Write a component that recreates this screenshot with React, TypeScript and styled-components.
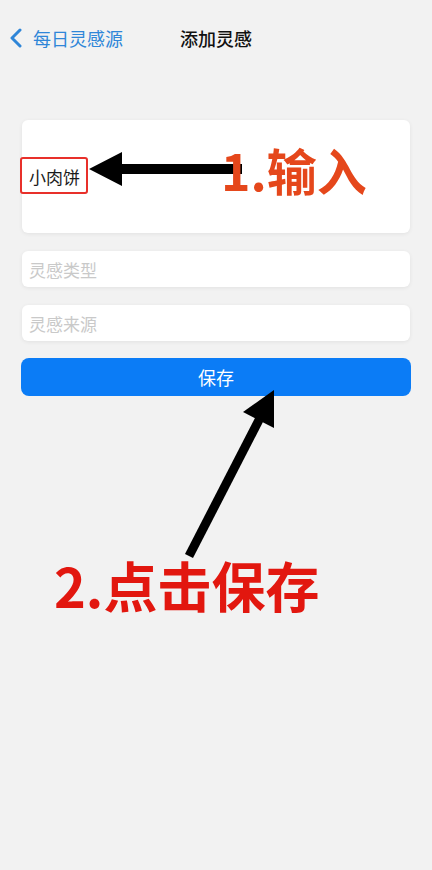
import React from "react";
import styled, {createGlobalStyle} from "styled-components";

const GlobalStyle = createGlobalStyle`
  html, body {
    margin: 0;
    padding: 0;
    background: #f2f2f2;
  }

  body {
    font-family: "Noto Sans CJK SC", "Noto Sans", sans-serif;
  }
`

const Page = styled.div`
  position: relative;
  width: 432px;
  min-height: 870px;
  background: #f2f2f2;
  overflow: hidden;
`

const NavBar = styled.div`
  position: relative;
  height: 44px;
  margin-top: 16px;
  display: flex;
  align-items: center;
  justify-content: center;
`

const BackLink = styled.div`
  position: absolute;
  left: 9px;
  top: 0;
  height: 100%;
  display: flex;
  align-items: center;
  gap: 10px;
  color: #2f86d8;
  font-size: 18px;
`

const NavTitle = styled.h1`
  margin: 0;
  font-size: 18px;
  font-weight: 500;
  color: #111;
`

const Form = styled.div`
  display: flex;
  flex-direction: column;
  gap: 18px;
  padding: 0 22px;
  margin-top: 60px;
`

const Field = styled.div<{ $tall?: boolean }>`
  position: relative;
  height: ${(p) => (p.$tall ? "113px" : "36px")};
  background: #fff;
  border-radius: 6px;
  box-shadow: 0 1px 4px rgba(0, 0, 0, 0.07);
  display: flex;
  align-items: center;
  padding: 0 7px;
  font-size: 17px;
  color: ${(p) => (p.$tall ? "#1a1a1a" : "#c9c9c9")};
`

const Highlight = styled.span`
  position: absolute;
  left: -2px;
  top: 37px;
  width: 68px;
  height: 37px;
  box-sizing: border-box;
  border: 2px solid #e8302a;
  border-radius: 3px;
`

const SaveButton = styled.button`
  height: 38px;
  margin: -1px -1px 0;
  border: none;
  border-radius: 8px;
  background: #0b7cf6;
  color: #fff;
  font-family: inherit;
  font-size: 18px;
`

const Arrow = styled.svg`
  position: absolute;
  left: 0;
  top: 0;
  pointer-events: none;
`

const Note = styled.div<{ $color: string; $size: number }>`
  position: absolute;
  font-weight: 700;
  line-height: 1;
  white-space: nowrap;
  color: ${(p) => p.$color};
  font-size: ${(p) => p.$size}px;
`

export default function App() {
    return (
        <Page>
            <GlobalStyle/>
            <NavBar>
                <BackLink>
                    <svg width="14" height="20" viewBox="0 0 14 20">
                        <polyline points="11,2 3,10 11,18" fill="none" stroke="#2f86d8" strokeWidth="3"
                                  strokeLinecap="round" strokeLinejoin="round"/>
                    </svg>
                    <span>每日灵感源</span>
                </BackLink>
                <NavTitle>添加灵感</NavTitle>
            </NavBar>
            <Form>
                <Field $tall>
                    小肉饼
                    <Highlight/>
                </Field>
                <Field>灵感类型</Field>
                <Field>灵感来源</Field>
                <SaveButton>保存</SaveButton>
            </Form>

            <Arrow width="432" height="870" viewBox="0 0 432 870">
                <polygon points="89,169 122,152 122,164 242,164 242,174 122,174 122,186" fill="#000"/>
                <line x1="189" y1="556" x2="261" y2="416" stroke="#000" strokeWidth="9"/>
                <polygon points="274,390 243,412 274,428" fill="#000"/>
            </Arrow>
            <Note $color="#e5471b" $size={50} style={{left: 221, top: 144}}>1.输入</Note>
            <Note $color="#e2170f" $size={54} style={{left: 54, top: 558}}>2.点击保存</Note>
        </Page>
    )
}
